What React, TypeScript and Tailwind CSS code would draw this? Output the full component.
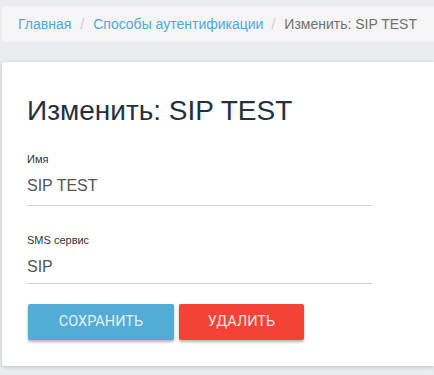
export default function App() {
  return (
    <div className="min-h-[375px] w-[434px] overflow-hidden bg-[#e9edf0] pt-[6px] pl-[2px] font-['Liberation_Sans',Arial,sans-serif]">
      <nav className="flex h-[36px] items-center rounded-l-[4px] bg-[#f5f5f5] pl-[16px] text-[14px]">
        <a className="text-[#4fa8d8]">Главная</a>
        <span className="pl-[9px] pr-[9px] text-[#cccccc]">/</span>
        <a className="text-[#4fa8d8]">Способы аутентификации</a>
        <span className="pl-[8px] pr-[9px] text-[#cccccc]">/</span>
        <span className="text-[#6f6f6f]">Изменить: SIP TEST</span>
      </nav>
      <div className="mt-[20px] h-[304px] rounded-l-[3px] bg-white pl-[25px] pt-[31px] shadow-[0_1px_4px_rgba(0,0,0,0.2)]">
        <h1 className="text-[28px] leading-[36px] text-[#22313b]">Изменить: SIP TEST</h1>
        <div className="mt-[23px] w-[345px]">
          <label className="block text-[11px] leading-[14px] text-[#333]">Имя</label>
          <div className="mt-[10px] border-b border-[#cfcfcf] pb-[9px] text-[16px] leading-[20px] text-[#555]">SIP TEST</div>
        </div>
        <div className="mt-[27px] w-[345px]">
          <label className="block text-[11px] leading-[14px] text-[#333]">SMS сервис</label>
          <div className="mt-[10px] border-b border-[#cfcfcf] pb-[6px] text-[16px] leading-[20px] text-[#555]">SIP</div>
        </div>
        <div className="mt-[20px] flex gap-[5px] pl-[1px] font-['Roboto',sans-serif]">
          <button className="h-[36px] w-[146px] rounded-[2px] bg-[#52acd5] text-[14.5px] uppercase text-[#e4f2f9] shadow-[0_2px_3px_rgba(0,0,0,0.3)]">Сохранить</button>
          <button className="h-[36px] w-[125px] rounded-[2px] bg-[#f44336] text-[14.5px] uppercase text-[#fde3e1] shadow-[0_2px_3px_rgba(0,0,0,0.3)]">Удалить</button>
        </div>
      </div>
    </div>
  );
}
